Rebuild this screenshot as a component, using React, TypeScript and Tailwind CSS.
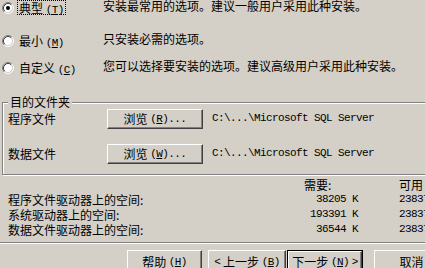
import type { ReactNode } from "react";

const bevel =
  "border border-t-white border-l-white border-r-[#404040] border-b-[#404040] shadow-[inset_-1px_-1px_0_#808080]";

const mono = "font-['Liberation_Mono',monospace] text-[11px] tracking-[-0.6px]";

function Radio({ checked }: { checked?: boolean }) {
  return (
    <svg width="12" height="12" viewBox="0 0 12 12" className="shrink-0">
      <circle cx="6" cy="6" r="4.5" fill="#fff" />
      <path d="M2.11 9.89 A5.5 5.5 0 0 1 9.89 2.11" fill="none" stroke="#808080" />
      <path d="M9.89 2.11 A5.5 5.5 0 0 1 2.11 9.89" fill="none" stroke="#fff" />
      <path d="M2.82 9.18 A4.5 4.5 0 0 1 9.18 2.82" fill="none" stroke="#404040" />
      <path d="M9.18 2.82 A4.5 4.5 0 0 1 2.82 9.18" fill="none" stroke="#D4D0C8" />
      {checked && <circle cx="6" cy="6" r="2" fill="#000" />}
    </svg>
  );
}

// access key, e.g. (T) with the letter underlined
function Key({ k }: { k: string }) {
  return (
    <span className={mono}>
      (<span className="underline underline-offset-1">{k}</span>)
    </span>
  );
}

function Btn({
  children,
  className = "",
  isDefault,
}: {
  children: ReactNode;
  className?: string;
  isDefault?: boolean;
}) {
  const inner = (
    <div className={`flex h-full w-full items-center justify-center ${bevel}`}>{children}</div>
  );
  if (isDefault)
    return <div className={`border border-black ${className}`}>{inner}</div>;
  return <div className={className}>{inner}</div>;
}

const options = [
  { label: "典型", k: "T", desc: "安装最常用的选项。建议一般用户采用此种安装。", checked: true, h: "h-[33px]" },
  { label: "最小", k: "M", desc: "只安装必需的选项。", h: "h-[27px]" },
  { label: "自定义", k: "C", desc: "您可以选择要安装的选项。建议高级用户采用此种安装。", h: "h-[30px]" },
];

const space = [
  { label: "程序文件驱动器上的空间:", need: "38205 K", free: "2383782 K" },
  { label: "系统驱动器上的空间:", need: "193391 K", free: "2383782 K" },
  { label: "数据文件驱动器上的空间:", need: "36544 K", free: "2383782 K" },
];

export default function App() {
  return (
    <div className="h-[268px] w-[425px] overflow-hidden bg-[#D4D0C8] font-['Noto_Sans_CJK_SC',sans-serif] text-[12px] leading-[14px] text-black">
      <div className="w-[480px]">
        {/* setup type */}
        {options.map((o) => (
          <div key={o.k} className={`flex ${o.h}`}>
            <div className="flex w-[103px] items-start pl-[2px] pt-[2px]">
              <Radio checked={o.checked} />
              <div
                className={`-mt-[2px] ml-[3px] h-[15px] whitespace-nowrap border px-[1px] leading-[13px] ${
                  o.checked ? "border-dotted border-black" : "border-transparent"
                }`}
              >
                {o.label} <Key k={o.k} />
              </div>
            </div>
            <div className="-mt-[1px] whitespace-nowrap leading-[13px]">{o.desc}</div>
          </div>
        ))}

        {/* target folder */}
        <fieldset className="mx-[2px] mt-[5px] border border-[#808080] px-0 pb-[10px] pt-0 shadow-[inset_1px_1px_0_#fff,1px_1px_0_#fff]">
          <legend className="ml-[5px] bg-[#D4D0C8] px-[2px] leading-[14px]">目的文件夹</legend>
          {[
            { label: "程序文件", k: "R" },
            { label: "数据文件", k: "W" },
          ].map((r, i) => (
            <div key={r.k} className={`flex h-[20px] items-center ${i ? "mt-[15px]" : ""}`}>
              <div className="w-[104px] pl-[5px]">{r.label}</div>
              <Btn className="h-[20px] w-[96px]">
                浏览&nbsp;<Key k={r.k} />
                <span className={mono}>...</span>
              </Btn>
              <div className={`-mt-[3px] ml-[9px] ${mono}`}>C:\...\Microsoft SQL Server</div>
            </div>
          ))}
        </fieldset>

        {/* disk space */}
        <div className="mt-[2px] grid grid-cols-[304px_54px_41px_auto] leading-[15px]">
          <div />
          <div>需要:</div>
          <div />
          <div>可用</div>
          {space.map((s) => (
            <div key={s.label} className="contents">
              <div className="pl-[8px]">{s.label}</div>
              <div className={`whitespace-nowrap text-right ${mono}`}>{s.need}</div>
              <div />
              <div className={`whitespace-nowrap ${mono}`}>{s.free}</div>
            </div>
          ))}
        </div>

        <div className="mt-[5px] h-[2px] border-t border-[#808080] border-b border-b-white" />

        {/* buttons */}
        <div className="mt-[6px] flex">
          <Btn className="ml-[127px] h-[23px] w-[75px]">
            帮助&nbsp;<Key k="H" />
          </Btn>
          <Btn className="ml-[6px] h-[23px] w-[78px]">
            <span className={mono}>&lt;</span>&nbsp;上一步&nbsp;<Key k="B" />
          </Btn>
          <Btn isDefault className="ml-[1px] h-[23px] w-[76px]">
            下一步&nbsp;<Key k="N" />&nbsp;<span className={mono}>&gt;</span>
          </Btn>
          <Btn className="ml-[11px] h-[23px] w-[75px]">取消</Btn>
        </div>
      </div>
    </div>
  );
}
